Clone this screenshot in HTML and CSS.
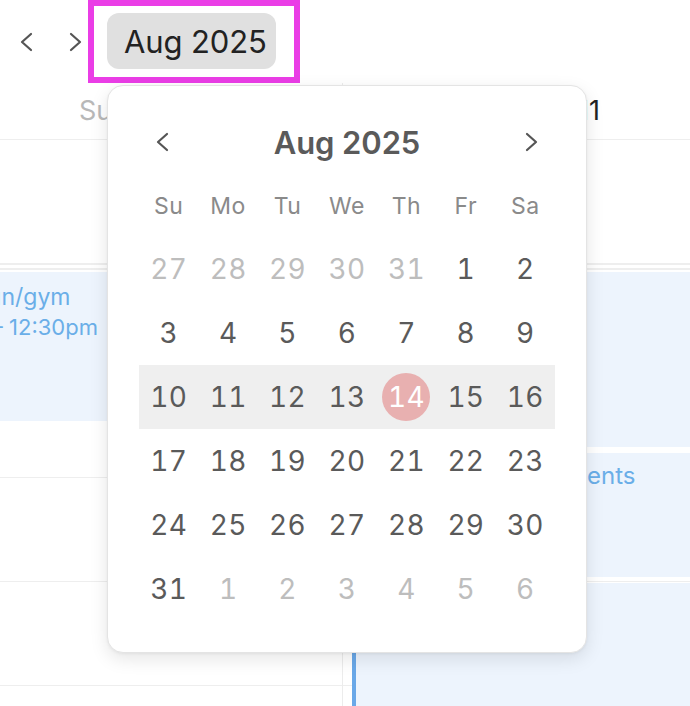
FILE: index.html
```html
<!DOCTYPE html>
<html lang="en">
<head>
<meta charset="utf-8">
<title>Week view – month picker</title>
<link rel="stylesheet" href="styles.css">
</head>
<body>
<div class="app">
  <header class="toolbar">
    <button class="nav nav-prev" aria-label="Previous week">
      <svg width="14" height="20" viewBox="0 0 14 20"><path d="M12 2 L3 10 L12 18" /></svg>
    </button>
    <button class="nav nav-next" aria-label="Next week">
      <svg width="14" height="20" viewBox="0 0 14 20"><path d="M2 2 L11 10 L2 18" /></svg>
    </button>
    <div class="highlight">
      <button class="month-btn">Aug 2025</button>
    </div>
  </header>

  <div class="week">
    <section class="day day-left">
      <div class="day-head muted">Sun 10</div>
      <div class="allday"></div>
      <div class="hours">
        <div class="hour"></div><div class="hour"></div><div class="hour"></div><div class="hour"></div>
        <div class="event ev-left">
          <div class="ev-title">Run/gym</div>
          <div class="ev-time">9 – 12:30pm</div>
        </div>
      </div>
    </section>
    <section class="day day-right">
      <div class="day-head strong">Mon 11</div>
      <div class="allday"></div>
      <div class="hours">
        <div class="hour"></div><div class="hour"></div><div class="hour"></div><div class="hour"></div>
        <div class="event ev-r1"><div class="ev-title">Focus work</div></div>
        <div class="event ev-r2"><div class="ev-title">Errands &amp; appointments</div></div>
        <div class="event ev-r3"><div class="ev-title">Reading</div></div>
      </div>
    </section>
  </div>

  <div class="popover" role="dialog" aria-label="Choose date">
    <div class="pop-head">
      <button class="pnav" aria-label="Previous month">
        <svg width="14" height="20" viewBox="0 0 14 20"><path d="M12 2 L3 10 L12 18" /></svg>
      </button>
      <div class="pop-title">Aug 2025</div>
      <button class="pnav" aria-label="Next month">
        <svg width="14" height="20" viewBox="0 0 14 20"><path d="M2 2 L11 10 L2 18" /></svg>
      </button>
    </div>
    <div class="weekdays">
      <span>Su</span><span>Mo</span><span>Tu</span><span>We</span><span>Th</span><span>Fr</span><span>Sa</span>
    </div>
    <div class="dates">
      <div class="row">
        <span class="d out">27</span><span class="d out">28</span><span class="d out">29</span><span class="d out">30</span><span class="d out">31</span><span class="d">1</span><span class="d">2</span>
      </div>
      <div class="row">
        <span class="d">3</span><span class="d">4</span><span class="d">5</span><span class="d">6</span><span class="d">7</span><span class="d">8</span><span class="d">9</span>
      </div>
      <div class="row current">
        <span class="d">10</span><span class="d">11</span><span class="d">12</span><span class="d">13</span><span class="d today"><i>14</i></span><span class="d">15</span><span class="d">16</span>
      </div>
      <div class="row">
        <span class="d">17</span><span class="d">18</span><span class="d">19</span><span class="d">20</span><span class="d">21</span><span class="d">22</span><span class="d">23</span>
      </div>
      <div class="row">
        <span class="d">24</span><span class="d">25</span><span class="d">26</span><span class="d">27</span><span class="d">28</span><span class="d">29</span><span class="d">30</span>
      </div>
      <div class="row">
        <span class="d">31</span><span class="d out">1</span><span class="d out">2</span><span class="d out">3</span><span class="d out">4</span><span class="d out">5</span><span class="d out">6</span>
      </div>
    </div>
  </div>
</div>
</body>
</html>
```

FILE: styles.css
```css
* { box-sizing: border-box; }
html, body {
  margin: 0;
  padding: 0;
  background: #ffffff;
}
body {
  width: 690px;
  height: 706px;
  overflow: hidden;
  font-family: Inter, "Liberation Sans", sans-serif;
  color: #222;
}
button {
  font-family: inherit;
  border: 0;
  background: none;
  padding: 0;
  margin: 0;
  cursor: pointer;
}
.app {
  position: relative;
  width: 690px;
  height: 706px;
  overflow: hidden;
}

/* toolbar */
.toolbar {
  height: 83px;
  display: flex;
  align-items: center;
  padding-left: 19px;
}
.nav {
  width: 14px;
  height: 20px;
  display: flex;
}
.nav svg path, .pnav svg path {
  fill: none;
  stroke: #555;
  stroke-width: 2.2;
  stroke-linecap: round;
  stroke-linejoin: round;
}
.nav-next { margin-left: 36px; }
.highlight {
  margin-left: 5px;
  align-self: flex-start;
  width: 212px;
  height: 83px;
  border: 6px solid #ea3de6;
  padding: 7px 18px 8px 13px;
}
.month-btn {
  width: 169px;
  height: 56px;
  border-radius: 12px;
  background: #e0e0e0;
  color: #222;
  font-size: 31px;
  font-weight: 400;
  text-align: left;
  padding-left: 17px;
  letter-spacing: -0.1px;
  white-space: nowrap;
}

/* background week grid */
.week {
  display: flex;
  height: 623px;
}
.day {
  position: relative;
  display: flex;
  flex-direction: column;
}
.day-left {
  width: 343px;
  border-right: 1px solid #ececec;
}
.day-right {
  flex: 1;
}
.day-head {
  height: 57px;
  border-bottom: 1px solid #eeeeee;
  font-size: 27px;
  line-height: 56px;
  white-space: nowrap;
}
.day-left .day-head { padding-left: 79px; color: #b8b8b8; }
.day-right .day-head { text-align: right; padding-right: 90px; color: #222; }
.allday {
  height: 125px;
  border-bottom: 2px solid #eeeeee;
  margin-bottom: 3px;
}
.hours {
  position: relative;
  border-top: 2px solid #eeeeee;
  flex: 1;
}
.hour {
  height: 104px;
  border-bottom: 1px solid #eeeeee;
}
.event {
  position: absolute;
  background: #edf4fd;
  border-left: 4px solid #6aa8e8;
  padding: 10px 8px;
  color: #6aaee8;
  overflow: hidden;
  white-space: nowrap;
}
.ev-title { font-size: 23px; line-height: 30px; }
.ev-time { font-size: 22px; line-height: 26px; margin-top: 2px; }
.ev-left { left: -39px; right: 0; top: 2px; height: 149px; }
.ev-left .ev-time { margin-left: -1px; }
.ev-r1 { left: 9px; right: 0; top: 2px; height: 175px; }
.ev-r2 { left: 9px; right: 0; top: 183px; height: 124px; padding-top: 8px; }
.ev-r2 .ev-title { font-size: 24px; }
.ev-r3 { left: 9px; right: 0; top: 313px; height: 200px; }

/* popover */
.popover {
  position: absolute;
  left: 107px;
  top: 85px;
  width: 480px;
  height: 568px;
  background: #fff;
  border: 1px solid #e4e4e4;
  border-radius: 16px;
  box-shadow: 0 6px 18px rgba(0, 0, 0, 0.10), 0 1px 3px rgba(0,0,0,0.05);
  padding: 27px 31px 31px;
}
.pop-head {
  height: 58px;
  display: flex;
  align-items: center;
  justify-content: space-between;
  padding: 0 16px;
}
.pnav { width: 14px; height: 20px; display: flex; }
.pop-title {
  font-size: 31px;
  font-weight: 600;
  color: #5a5a5a;
  letter-spacing: -0.1px;
}
.weekdays {
  margin-top: 11px;
  height: 48px;
  display: grid;
  grid-template-columns: repeat(7, 1fr);
  align-items: center;
  text-align: center;
  font-size: 23px;
  letter-spacing: 0.5px;
  color: #8a8a8a;
}
.dates { margin-top: 7px; }
.row {
  height: 64px;
  display: grid;
  grid-template-columns: repeat(7, 1fr);
  align-items: center;
  text-align: center;
}
.row.current { background: #efefef; }
.d {
  font-size: 28px;
  font-variant-numeric: tabular-nums;
  letter-spacing: 0.3px;
  color: #5a5a5a;
  display: flex;
  justify-content: center;
  align-items: center;
}
.d.out { color: #bdbdbd; }
.d.today i {
  font-style: normal;
  width: 48px;
  height: 48px;
  border-radius: 50%;
  background: #e8b0b0;
  color: #fff;
  display: flex;
  align-items: center;
  justify-content: center;
}
```
